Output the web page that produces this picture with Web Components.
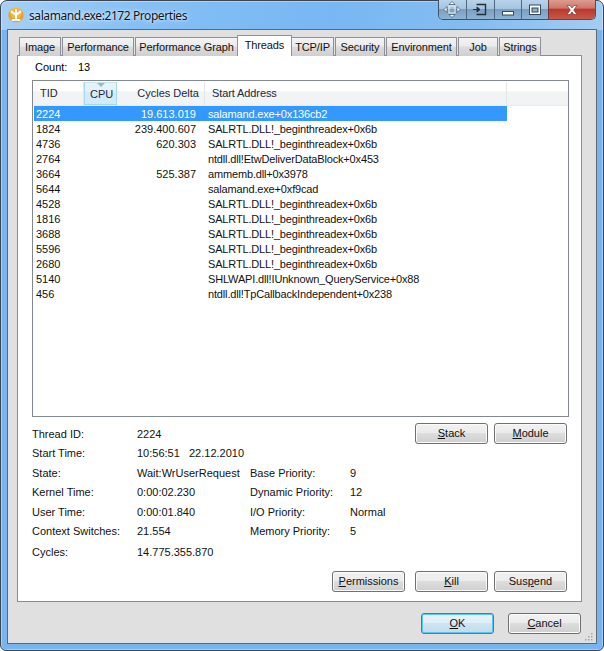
<!DOCTYPE html>
<html>
<head>
<meta charset="utf-8">
<title>salamand.exe:2172 Properties</title>
<style>
  html, body { margin: 0; padding: 0; background: #fff; }
  body { font: 11px "Liberation Sans", sans-serif; color: #000; }
</style>
</head>
<body>
<pe-window caption="salamand.exe:2172 Properties">
  <pe-tabs></pe-tabs>
  <pe-panel>
    <pe-count></pe-count>
    <pe-threads></pe-threads>
    <pe-details></pe-details>
  </pe-panel>
  <pe-button slot="footer" default><u>O</u>K</pe-button>
  <pe-button slot="footer"><u>C</u>ancel</pe-button>
</pe-window>

<script>
// Aero caption and client area of the dialog
class PeWindow extends HTMLElement {
  constructor() {
    super();
    this.attachShadow({ mode: 'open' });
    this.shadowRoot.innerHTML = `
      <style>
        :host { display: block; width: 604px; height: 651px; box-sizing: border-box; }
        .frame {
          position: relative; box-sizing: border-box; width: 604px; height: 651px;
          border: 1px solid #3d4650; border-radius: 7px 7px 6px 6px;
          background:
            linear-gradient(100deg, #a6d0f6 0, #86c0f5 22%, #78b7f3 55%, #86bdf1 80%, #a3cdf3 100%) top/100% 29px no-repeat,
            #78b5ef;
          box-shadow: inset 0 0 0 1px rgba(255,255,255,.35);
          padding: 0 6px 6px 6px;
          display: flex; flex-direction: column;
        }
        .bar { height: 28px; display: flex; align-items: flex-start; flex: none; }
        .logo { width: 16px; height: 16px; margin: 6px 5px 0 1px; flex: none; }
        .title {
          font: 12px "Noto Sans", sans-serif; letter-spacing: -.42px; color: #10141a; margin-top: 6px; line-height: 17px;
          text-shadow: 0 0 5px rgba(255,255,255,.9), 0 0 2px rgba(255,255,255,.6);
          flex: 1;
        }
        .caps { display: flex; height: 20px; margin-top: -1px; margin-right: 1px; border: 1px solid #3f5366; border-top: 0; border-radius: 0 0 5px 5px; overflow: hidden; box-sizing: border-box; width: 158px; flex: none; }
        .cap {
          display: flex; align-items: center; justify-content: center; box-sizing: border-box;
          width: 28px; border-right: 1px solid #4d6880;
          background: linear-gradient(#b9d3ea 0, #a5c4e0 45%, #7a9fc2 50%, #8fb3d3 100%);
        }
        .cap:nth-child(4) { width: 26px; border-right: 0; }
        .cap.close {
          width: 47px; border-right: 0; border-left: 1px solid #6d3a36;
          background: linear-gradient(#dc9c90 0, #d0766a 42%, #b93a2c 50%, #c9584a 100%);
        }
        .client {
          flex: 1; box-sizing: border-box; border: 1px solid #5d6872;
          background: #e0e0e0; padding: 5px 14px 0 9px;
          display: flex; flex-direction: column;
        }
        .footer { display: flex; justify-content: flex-end; gap: 14px; margin-top: 11px; padding-right: 1px; }
        ::slotted(pe-button) { width: 73px; }
        .grip { position: absolute; right: 10px; bottom: 9px; }
      </style>
      <div class="frame">
        <div class="bar">
          <svg class="logo" viewBox="0 0 16 16">
            <circle cx="8" cy="8" r="7.6" fill="#eda01f"/>
            <circle cx="8" cy="6" r="6" fill="#f7c35a" opacity=".6"/>
            <path d="M8 13V8M8 8L3.600 4.600M8 8l4.400-3.400M8 8V3M4.500 13h7" stroke="#fff" stroke-width="2" fill="none" stroke-linecap="round"/>
          </svg>
          <div class="title"></div>
          <div class="caps">
            <div class="cap"><svg width="18" height="17" viewBox="0 0 18 17"><path d="M9 .5l3 3H6zM9 16.500l-3-3h6zM1 8.500l3-3v6zM17 8.500l-3 3v-6z" fill="#fff" stroke="#33485c" stroke-width=".7"/><rect x="6" y="5" width="6" height="7" fill="none" stroke="#e8f2fa"/></svg></div>
            <div class="cap"><svg width="16" height="14" viewBox="0 0 16 14"><path d="M4.500 1.500h9v10h-9" fill="none" stroke="#22303c" stroke-width="1.400"/><path d="M1 6.500h6M5 4l3 2.500L5 9z" fill="#22303c" stroke="#22303c"/></svg></div>
            <div class="cap"><svg width="14" height="14" viewBox="0 0 14 14"><rect x="1.500" y="8.500" width="11" height="3.500" fill="#fff" stroke="#33485c"/></svg></div>
            <div class="cap"><svg width="14" height="14" viewBox="0 0 14 14"><rect x="1.500" y="2" width="11" height="9.500" fill="#fff" stroke="#33485c"/><rect x="4" y="5" width="6" height="4" fill="#8fb1cf" stroke="#33485c"/></svg></div>
            <div class="cap close"><svg width="16" height="14" viewBox="0 0 16 14"><path d="M3 2.500h3L8 5l2-2.500h3L9.700 7 13 11.500h-3L8 9l-2 2.500H3L6.300 7z" fill="#fff" stroke="#6e2a22" stroke-width=".6"/></svg></div>
          </div>
        </div>
        <div class="client">
          <slot></slot>
          <div class="footer"><slot name="footer"></slot></div>
        </div>
        <svg class="grip" width="9" height="9" viewBox="0 0 9 9" fill="#a8a8a8"><rect x="7" y="1" width="1.500" height="1.500"/><rect x="4" y="4" width="1.500" height="1.500"/><rect x="7" y="4" width="1.500" height="1.500"/><rect x="1" y="7" width="1.500" height="1.500"/><rect x="4" y="7" width="1.500" height="1.500"/><rect x="7" y="7" width="1.500" height="1.500"/></svg>
      </div>`;
    this.shadowRoot.querySelector('.title').textContent = this.getAttribute('caption');
  }
}

// Tab strip, widths taken from the original control
const TABS = [
  ['Image', 42], ['Performance', 72], ['Performance Graph', 103], ['Threads', 55],
  ['TCP/IP', 43], ['Security', 50], ['Environment', 71], ['Job', 40], ['Strings', 42]
];
class PeTabs extends HTMLElement {
  constructor() {
    super();
    this.attachShadow({ mode: 'open' });
    const html = TABS.map(([name, w]) =>
      `<div class="tab ${name === 'Threads' ? 'on' : ''}" style="width:${w}px">${name}</div>`).join('');
    this.shadowRoot.innerHTML = `
      <style>
        :host { display: block; height: 21px; margin-bottom: -1px; position: relative; z-index: 1; padding-left: 2px; letter-spacing: -.12px; }
        .row { display: flex; align-items: flex-end; height: 21px; }
        .tab {
          box-sizing: border-box; height: 19px; margin-right: 1px; text-align: center; line-height: 18px;
          border: 1px solid #8e9298; border-bottom: 0; border-radius: 1px 1px 0 0; white-space: nowrap;
          background: linear-gradient(#f3f3f3 0, #ebebeb 45%, #dcdcdc 50%, #cfcfcf 100%);
          color: #111;
        }
        .tab.on { height: 21px; margin: 0 -1px 0 -2px; background: #fff; line-height: 19px; position: relative; }
        .tab:nth-child(5) { margin-left: 0; }
      </style>
      <div class="row">${html}</div>`;
  }
}

class PePanel extends HTMLElement {
  constructor() {
    super();
    this.attachShadow({ mode: 'open' });
    this.shadowRoot.innerHTML = `
      <style>
        :host {
          display: block; box-sizing: border-box; height: 547px; background: #fff;
          border: 1px solid #898c95; padding: 0 12px 9px 14px;
        }
      </style>
      <slot></slot>`;
  }
}

class PeCount extends HTMLElement {
  constructor() {
    super();
    this.attachShadow({ mode: 'open' });
    this.shadowRoot.innerHTML = `
      <style>
        :host { display: flex; height: 24px; align-items: center; padding-left: 3px; box-sizing: border-box; padding-bottom: 2px; }
        .k { width: 43px; }
      </style>
      <span class="k">Count:</span><span>13</span>`;
  }
}

const THREADS = [
  ['2224', '19.613.019', 'salamand.exe+0x136cb2'],
  ['1824', '239.400.607', 'SALRTL.DLL!_beginthreadex+0x6b'],
  ['4736', '620.303', 'SALRTL.DLL!_beginthreadex+0x6b'],
  ['2764', '', 'ntdll.dll!EtwDeliverDataBlock+0x453'],
  ['3664', '525.387', 'ammemb.dll+0x3978'],
  ['5644', '', 'salamand.exe+0xf9cad'],
  ['4528', '', 'SALRTL.DLL!_beginthreadex+0x6b'],
  ['1816', '', 'SALRTL.DLL!_beginthreadex+0x6b'],
  ['3688', '', 'SALRTL.DLL!_beginthreadex+0x6b'],
  ['5596', '', 'SALRTL.DLL!_beginthreadex+0x6b'],
  ['2680', '', 'SALRTL.DLL!_beginthreadex+0x6b'],
  ['5140', '', 'SHLWAPI.dll!IUnknown_QueryService+0x88'],
  ['456', '', 'ntdll.dll!TpCallbackIndependent+0x238']
];
class PeThreads extends HTMLElement {
  constructor() {
    super();
    this.attachShadow({ mode: 'open' });
    const rows = THREADS.map((t, i) => `
      <div class="row ${i === 0 ? 'sel' : ''}">
        <span class="tid">${t[0]}</span><span class="cyc">${t[1]}</span><span class="addr">${t[2]}</span>
      </div>`).join('');
    this.shadowRoot.innerHTML = `
      <style>
        :host { display: block; box-sizing: border-box; height: 337px; border: 1px solid #828790; background: #fff; }
        .head {
          display: flex; height: 24px; box-sizing: border-box; color: #1d2a3a;
          background: linear-gradient(#fff 0, #fff 40%, #f2f3f4 42%, #f2f3f4 100%);
          border-bottom: 1px solid #e6ecf2; margin-top: 1px;
        }
        .h { box-sizing: border-box; line-height: 22px; border-right: 1px solid #e3e5e8; height: 23px; }
        .h.tid { width: 51px; padding-left: 7px; }
        .h.cpu {
          width: 33px; padding-left: 5px; position: relative;
          background: linear-gradient(#e6f4fc 0, #e2f2fb 40%, #d3ebf9 42%, #d3ebf9 100%);
          border: 1px solid #a5d9f5; border-top-color: #c5e6f8;
        }
        .h.cpu::before {
          content: ""; position: absolute; left: 12px; top: 0;
          border: 4px solid transparent; border-top: 4px solid #9fb8c8; border-bottom: 0;
        }
        .h.cyc { width: 88px; text-align: right; padding-right: 5px; }
        .h.addr { width: 302px; padding-left: 7px; letter-spacing: -.1px; }
        .h.end { flex: 1; border-right: 0; }
        .row { display: flex; width: 473px; height: 15px; line-height: 17px; margin-left: 1px; color: #111; }
        .row.sel { background: #3399ff; color: #fff; }
        .row .tid { width: 50px; padding-left: 2px; box-sizing: border-box; }
        .row .cyc { width: 112px; text-align: right; box-sizing: border-box; }
        .row .addr { margin-left: 12px; white-space: nowrap; letter-spacing: -.16px; }
      </style>
      <div class="head">
        <div class="h tid">TID</div><div class="h cpu">CPU</div><div class="h cyc">Cycles Delta</div>
        <div class="h addr">Start Address</div><div class="h end"></div>
      </div>
      ${rows}`;
  }
}

// Label and value grid below the list, with the two groups of action buttons
const DETAILS = [
  ['Thread ID:', '2224'],
  ['Start Time:', '10:56:51 &nbsp;&nbsp;22.12.2010'],
  ['State:', 'Wait:WrUserRequest', 'Base Priority:', '9'],
  ['Kernel Time:', '0:00:02.230', 'Dynamic Priority:', '12'],
  ['User Time:', '0:00:01.840', 'I/O Priority:', 'Normal'],
  ['Context Switches:', '21.554', 'Memory Priority:', '5'],
  ['Cycles:', '14.775.355.870']
];
class PeDetails extends HTMLElement {
  constructor() {
    super();
    this.attachShadow({ mode: 'open' });
    const cells = DETAILS.map((d, r) => d.map((txt, c) =>
      `<span style="grid-row:${r + 1};grid-column:${c + 1}">${txt}</span>`).join('')).join('');
    this.shadowRoot.innerHTML = `
      <style>
        :host { display: grid; height: 169px; margin-top: 6px; color: #111; }
        .grid, .actions { grid-area: 1 / 1; }
        .grid {
          display: grid; padding-top: 3px; line-height: 16px; white-space: nowrap;
          grid-template-columns: 105px 113px 100px 40px;
          grid-template-rows: 19px 20px 19px 20px 19px 21px 16px;
          justify-content: start; align-content: start;
        }
        .actions { display: flex; flex-direction: column; justify-content: space-between; margin-right: 2px; }
        .btns { display: flex; justify-content: flex-end; gap: 6px; }
        pe-button { width: 73px; }
        .btns pe-button.wide { margin-left: 4px; }
      </style>
      <div class="grid">${cells}</div>
      <div class="actions">
        <div class="btns"><pe-button><u>S</u>tack</pe-button><pe-button><u>M</u>odule</pe-button></div>
        <div class="btns"><pe-button><u>P</u>ermissions</pe-button><pe-button class="wide"><u>K</u>ill</pe-button><pe-button>Sus<u>p</u>end</pe-button></div>
      </div>`;
  }
}

class PeButton extends HTMLElement {
  constructor() {
    super();
    this.attachShadow({ mode: 'open' });
    this.shadowRoot.innerHTML = `
      <style>
        :host { display: block; box-sizing: border-box; height: 21px; color: #111; }
        .b {
          box-sizing: border-box; height: 21px; border: 1px solid #707070; border-radius: 3px;
          text-align: center; line-height: 19px;
          background: linear-gradient(#f2f2f2 0, #ebebeb 47%, #dddddd 50%, #cfcfcf 100%);
          box-shadow: inset 0 0 0 1px #fbfbfb;
        }
        :host([default]) .b {
          border-color: #3c7fb1; box-shadow: inset 0 0 0 1px #5cc5ef;
          background: linear-gradient(#e6f3fa 0, #dfeef7 47%, #cfe4f1 50%, #c3dbea 100%);
        }
      </style>
      <div class="b"><slot></slot></div>`;
  }
}

customElements.define('pe-button', PeButton);
customElements.define('pe-tabs', PeTabs);
customElements.define('pe-panel', PePanel);
customElements.define('pe-count', PeCount);
customElements.define('pe-threads', PeThreads);
customElements.define('pe-details', PeDetails);
customElements.define('pe-window', PeWindow);
</script>
</body>
</html>
